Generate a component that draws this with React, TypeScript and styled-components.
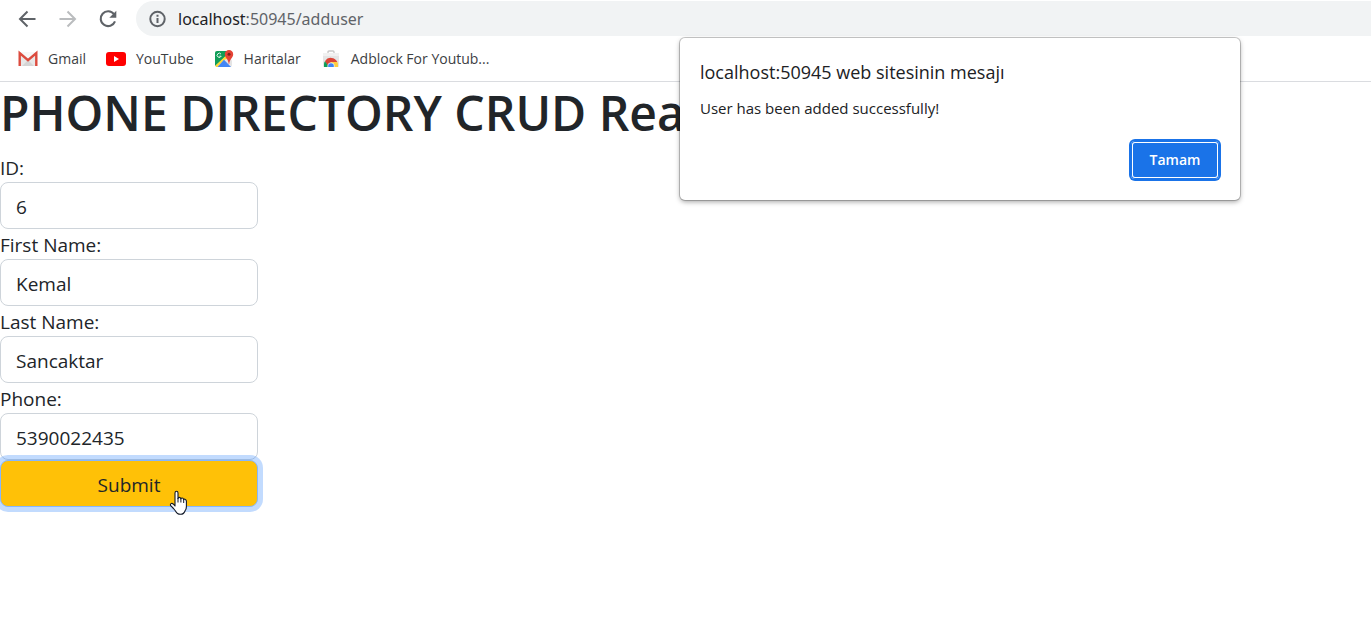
import React, { useState } from 'react';
import styled, { createGlobalStyle } from 'styled-components';

const GlobalStyle = createGlobalStyle`
  *, *::before, *::after { box-sizing: border-box; }
  body {
    margin: 0;
    background: #fff;
    color: #212529;
    font-family: "Segoe UI", "Open Sans", "Noto Sans", sans-serif;
    font-size: 19px;
    line-height: 30px;
  }
  button, input { font: inherit; color: inherit; }
`;

const Toolbar = styled.div`
  display: flex;
  align-items: center;
  height: 36px;
  padding: 1px 0 0 16px;
  overflow: hidden;
`;

const NavButton = styled.button<{ $faded?: boolean }>`
  display: flex;
  flex: none;
  margin-right: 16px;
  padding: 0;
  border: 0;
  background: none;
  color: ${(p) => (p.$faded ? '#babcbe' : '#5f6368')};
`;

const AddressBar = styled.div`
  display: flex;
  flex: 1;
  align-items: center;
  gap: 10px;
  height: 35px;
  padding-left: 12px;
  border-radius: 18px 0 0 18px;
  background: #f1f3f4;
  color: #5f6368;
  font-family: "Noto Sans", sans-serif;
  font-size: 16px;
`;

const Host = styled.span`
  color: #202124;
`;

const Bookmarks = styled.nav`
  display: flex;
  align-items: center;
  gap: 20px;
  height: 46px;
  padding-left: 18px;
  border-bottom: 1px solid #dadce0;
`;

const Bookmark = styled.a`
  display: flex;
  align-items: center;
  gap: 10px;
  color: #3c4043;
  font-size: 14px;
  text-decoration: none;
  white-space: nowrap;
`;

const Page = styled.main`
  padding-bottom: 20px;
`;

const Title = styled.h1`
  margin: 0 0 8px;
  font-size: 48px;
  font-weight: 600;
  line-height: 62px;
  white-space: nowrap;
`;

const UserForm = styled.form`
  display: flex;
  flex-direction: column;
  width: 258px;
`;

const Field = styled.label`
  display: flex;
  flex-direction: column;
  padding-top: 2px;
  line-height: 28px;
`;

const TextInput = styled.input`
  width: 100%;
  height: 47px;
  padding: 2px 15px 0;
  border: 1px solid #ced4da;
  border-radius: 8px;
  background: #fff;
  outline: none;
`;

const SubmitButton = styled.button`
  position: relative;
  height: 47px;
  padding: 3px 0 0;
  border: 1px solid #86b7fe;
  border-radius: 8px;
  background: #ffc107;
  box-shadow: 0 0 0 5px rgba(13, 110, 253, 0.25);
`;

const Dialog = styled.section`
  position: absolute;
  top: 38px;
  left: 680px;
  display: flex;
  flex-direction: column;
  width: 560px;
  padding: 20px;
  border-radius: 5px;
  background: #fff;
  box-shadow: 0 0 0 1px rgba(0, 0, 0, 0.2), 0 2px 5px rgba(0, 0, 0, 0.35);
  color: #202124;
`;

const DialogTitle = styled.h2`
  margin: 0 0 8px;
  font-size: 18px;
  font-weight: 400;
  line-height: 28px;
`;

const Message = styled.p`
  margin: 0;
  font-size: 15px;
  line-height: 28px;
`;

const ConfirmButton = styled.button`
  align-self: flex-end;
  width: 88px;
  height: 38px;
  margin: 19px 1px 1px 0;
  padding: 0;
  border: 0;
  border-radius: 4px;
  background: #1a73e8;
  box-shadow: inset 0 0 0 1px #1a73e8, inset 0 0 0 2px #fff, 0 0 0 2px #1a73e8;
  color: #fff;
  font-size: 14px;
  font-weight: 600;
`;

const Pointer = styled.svg`
  position: absolute;
  top: 490px;
  left: 169px;
  pointer-events: none;
`;

const ArrowIcon = ({ flip }: { flip?: boolean }) => (
  <svg width="24" height="24" viewBox="0 0 24 24" fill="none" stroke="currentColor" strokeWidth="2">
    <path d={flip ? 'M3.5 12H18.5M11.5 4.5L19 12L11.5 19.5' : 'M19.5 12H4.5M11.5 4.5L4 12L11.5 19.5'} />
  </svg>
);

const ReloadIcon = () => (
  <svg width="24" height="24" viewBox="0 0 24 24" fill="none">
    <path d="M18 7.2A7.4 7.4 0 1 0 19 14.3" stroke="currentColor" strokeWidth="2.1" />
    <path d="M20.3 3.8V10.8H13.3Z" fill="currentColor" />
  </svg>
);

const InfoIcon = () => (
  <svg width="20" height="20" viewBox="0 0 20 20" fill="none" stroke="#5f6368" strokeWidth="2">
    <circle cx="9.5" cy="10" r="7.2" />
    <path d="M9.5 9V14M9.5 5.8V7.8" />
  </svg>
);

const GmailIcon = () => (
  <svg width="20" height="20" viewBox="0 0 20 20">
    <path d="M1 3H19V17H1Z" fill="#e8e8e8" />
    <path d="M4 17L10 11L16 17Z" fill="#d5d5d5" />
    <path d="M2 3H18L10 9.5Z" fill="#f7f7f7" />
    <path d="M1.7 17V4.2L10 11.2L18.3 4.2V17" fill="none" stroke="#dc4b3e" strokeWidth="2.4" />
  </svg>
);

const YouTubeIcon = () => (
  <svg width="20" height="20" viewBox="0 0 20 20">
    <rect y="3" width="20" height="14" rx="3" fill="#f00" />
    <path d="M8 7V13L13 10Z" fill="#fff" />
  </svg>
);

const MapsIcon = () => (
  <svg width="20" height="20" viewBox="0 0 20 20">
    <path d="M3 2H13L18 12V16Q18 18 16 18H3Q1 18 1 16V4Q1 2 3 2Z" fill="#e4e4e4" />
    <path d="M3 2H13L13.5 6L1 17V4Q1 2 3 2Z" fill="#109d58" />
    <path d="M1.5 16.5L12 6.5L15 9L10 11L3.5 18H2Z" fill="#fdd835" />
    <path d="M3.5 18L10 10.8L17 18Z" fill="#4285f4" />
    <path d="M7 5.1A2.1 2.1 0 1 0 7.2 7.2H5.3" fill="none" stroke="#e5f5ec" strokeWidth="1" />
    <path d="M15 1A4.2 4.2 0 0 1 19.2 5.2C19.2 8.7 15.7 9.7 15.2 15H14.8C14.3 9.7 10.8 8.7 10.8 5.2A4.2 4.2 0 0 1 15 1Z" fill="#e54335" />
    <circle cx="15" cy="5.2" r="1.5" fill="#7b231e" />
  </svg>
);

const StoreIcon = () => (
  <svg width="20" height="20" viewBox="0 0 20 20">
    <path d="M7 5V3Q7 2 8 2H12Q13 2 13 3V5" fill="none" stroke="#c9c9c9" strokeWidth="1.4" />
    <path d="M2 4H18V17Q18 18 17 18H3Q2 18 2 17Z" fill="#e5e5e5" />
    <path d="M2 4H18V7H2Z" fill="#f1f1f1" />
    <path d="M4 12.3A7 7 0 0 1 16.4 13H10L7 18Z" fill="#db4437" />
    <path d="M3 18V15Q3 13.5 4 12.3L8 18Z" fill="#0f9d58" />
    <path d="M10 13H16.4Q17 14.5 17 16V18H9Z" fill="#ffcd40" />
    <path d="M6.5 18V17A3.5 3.5 0 0 1 13.5 17V18Z" fill="#f1f1f1" />
    <path d="M7.2 18V17A2.8 2.8 0 0 1 12.8 17V18Z" fill="#4285f4" />
  </svg>
);

const bookmarks = [
  { name: 'Gmail', Icon: GmailIcon },
  { name: 'YouTube', Icon: YouTubeIcon },
  { name: 'Haritalar', Icon: MapsIcon },
  { name: 'Adblock For Youtub...', Icon: StoreIcon },
];

const fields = [
  { key: 'id', label: 'ID:' },
  { key: 'firstName', label: 'First Name:' },
  { key: 'lastName', label: 'Last Name:' },
  { key: 'phone', label: 'Phone:' },
];

export default function App() {
  const [user, setUser] = useState<Record<string, string>>({
    id: '6',
    firstName: 'Kemal',
    lastName: 'Sancaktar',
    phone: '5390022435',
  });

  return (
    <>
      <GlobalStyle />
      <header>
        <Toolbar>
          <NavButton aria-label="Back"><ArrowIcon /></NavButton>
          <NavButton aria-label="Forward" $faded><ArrowIcon flip /></NavButton>
          <NavButton aria-label="Reload"><ReloadIcon /></NavButton>
          <AddressBar>
            <InfoIcon />
            <span><Host>localhost</Host>:50945/adduser</span>
          </AddressBar>
        </Toolbar>
        <Bookmarks>
          {bookmarks.map(({ name, Icon }) => (
            <Bookmark key={name} href="#"><Icon />{name}</Bookmark>
          ))}
        </Bookmarks>
      </header>
      <Page>
        <Title>PHONE DIRECTORY CRUD Rea</Title>
        <UserForm onSubmit={(e) => e.preventDefault()}>
          {fields.map(({ key, label }) => (
            <Field key={key}>
              {label}
              <TextInput
                name={key}
                value={user[key]}
                onChange={(e) => setUser({ ...user, [key]: e.target.value })}
              />
            </Field>
          ))}
          <SubmitButton type="submit">Submit</SubmitButton>
        </UserForm>
      </Page>
      <Pointer width="19" height="26" viewBox="0 0 19 26">
        <path
          d="M6 16V3Q6 1.2 7.5 1.2T9 3V8.5Q9 7.4 10.3 7.4T11.8 8.8Q12 8 13.2 8T14.6 9.6Q15 9 16 9.2T17.4 11V16.5Q17.4 19 16.2 20.5Q15 24.3 11.5 24.3Q8 24.3 6.5 21L4.5 18.5L1.7 15.7Q1 14.3 2 13.6T4.4 14.2Z"
          fill="#fff" stroke="#111827" strokeWidth="1.1" strokeLinejoin="round"
        />
        <path d="M9 8V12.5M11.9 9V12.5M14.7 10V13" stroke="#111827" strokeWidth="1" />
      </Pointer>
      <Dialog role="dialog" aria-labelledby="dialog-title">
        <DialogTitle id="dialog-title">localhost:50945 web sitesinin mesajı</DialogTitle>
        <Message>User has been added successfully!</Message>
        <ConfirmButton>Tamam</ConfirmButton>
      </Dialog>
    </>
  );
}
